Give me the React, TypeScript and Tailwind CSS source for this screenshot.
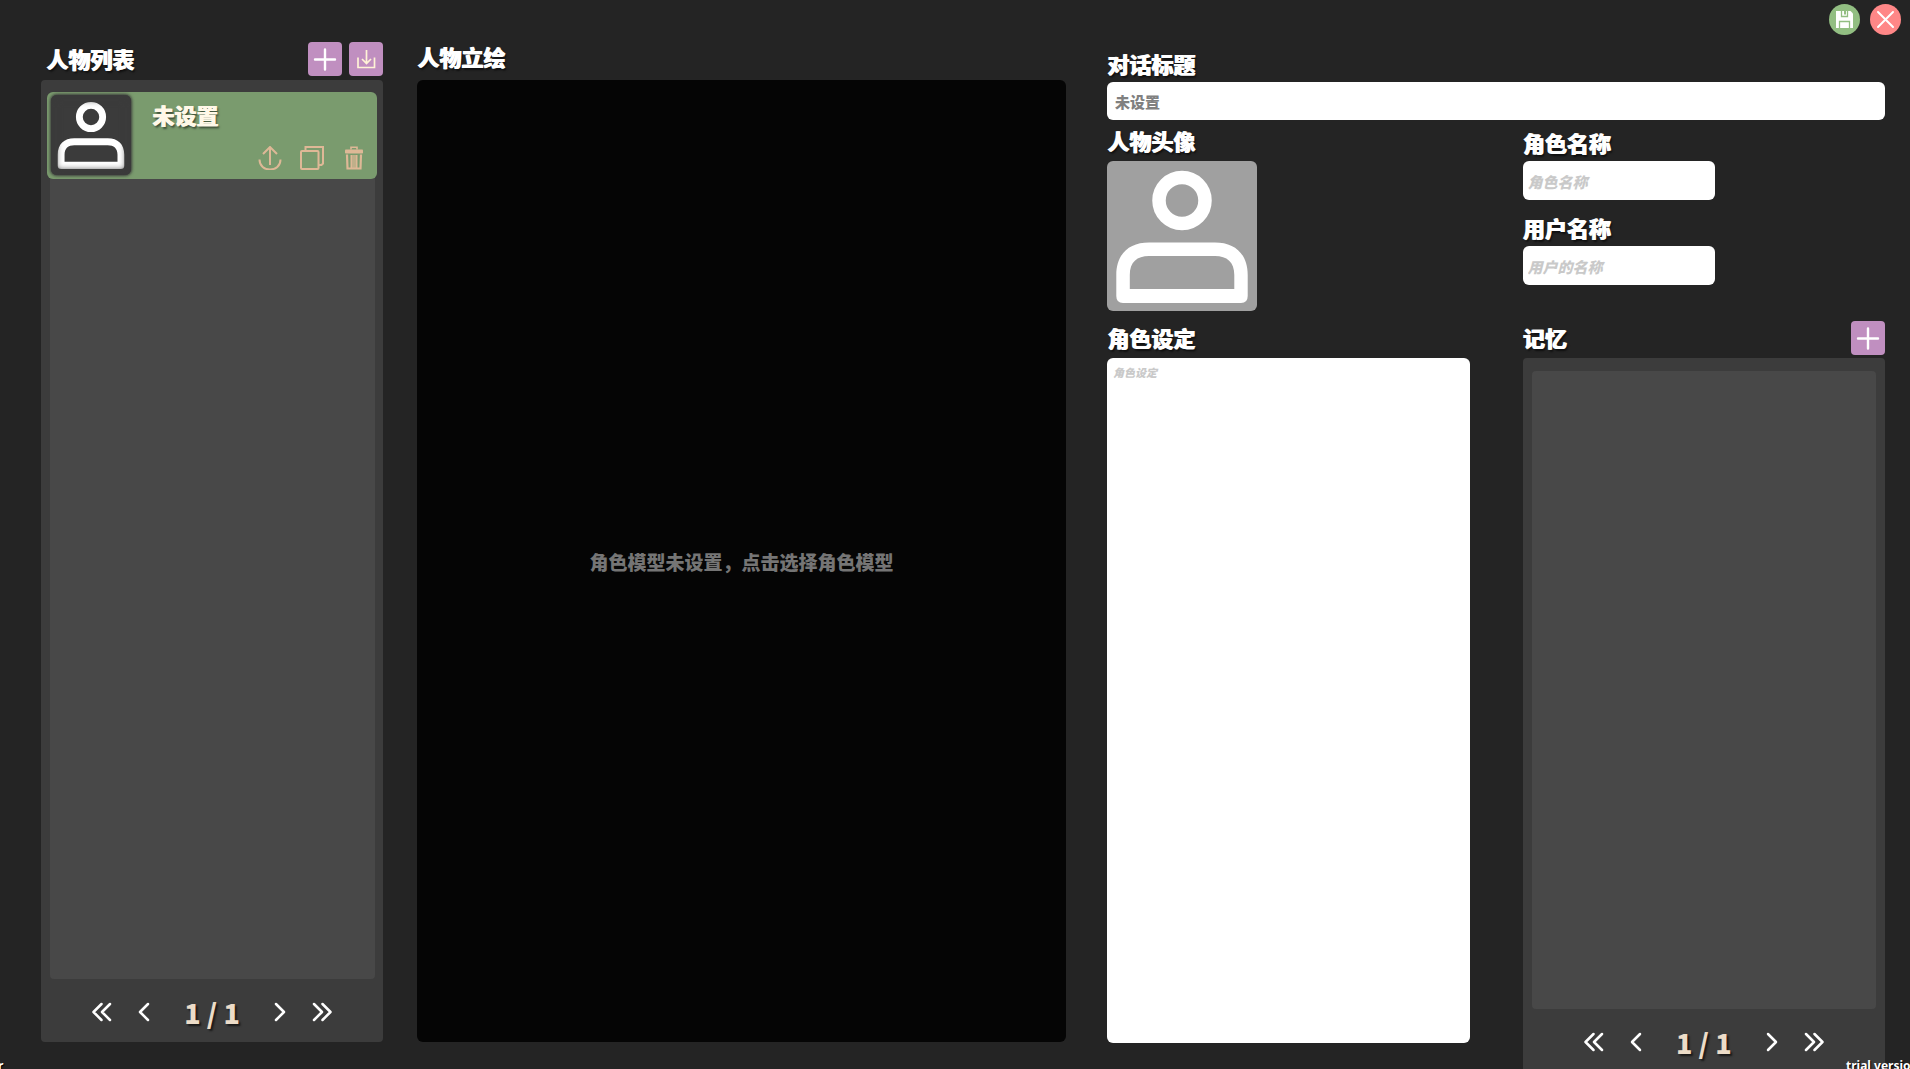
import type { ReactNode } from "react";

const headingShadow = "[text-shadow:1px_0_0_currentColor,2px_2px_2px_rgba(0,0,0,0.6)]";

function Heading({ children, htmlFor }: { children: ReactNode; htmlFor?: string }) {
  const cls = `block text-[22px] leading-6 font-black text-white ${headingShadow}`;
  return htmlFor ? (
    <label htmlFor={htmlFor} className={cls}>
      {children}
    </label>
  ) : (
    <h2 className={cls}>{children}</h2>
  );
}

function PersonIcon({ className }: { className: string }) {
  return (
    <svg viewBox="0 0 150 150" className={className} fill="white" aria-hidden="true">
      <circle cx="75" cy="39.5" r="23" fill="none" stroke="white" strokeWidth="13.5" />
      <path
        fillRule="evenodd"
        d="M9.3 135V114C9.3 93 22 81.5 42 81.5H108C128 81.5 140.7 93 140.7 114V135Q140.7 142 134 142H16Q9.3 142 9.3 135ZM22.8 128V114C22.8 101 30 95 42 95H108C120 95 127.3 101 127.3 114V128Z"
      />
    </svg>
  );
}

function PlusIcon() {
  return (
    <svg viewBox="0 0 34 34" className="size-[34px]" stroke="white" strokeWidth="2.4" strokeLinecap="round" aria-hidden="true">
      <path d="M17 7.5V27.5M7 17.5H27" />
    </svg>
  );
}

function SquareButton({ label, children }: { label: string; children: ReactNode }) {
  return (
    <button type="button" aria-label={label} className="size-[34px] shrink-0 rounded-[4px] bg-[#c08fc0]">
      {children}
    </button>
  );
}

function Chevron({ d, label }: { d: string; label: string }) {
  return (
    <button type="button" aria-label={label} className="flex h-6 w-[42px] items-center justify-center">
      <svg viewBox="0 0 20 20" className="size-5" fill="none" stroke="white" strokeWidth="2.5" strokeLinecap="round" strokeLinejoin="round" aria-hidden="true">
        <path d={d} />
      </svg>
    </button>
  );
}

function Pager({ className }: { className: string }) {
  return (
    <nav aria-label="分页" className={`flex shrink-0 items-start justify-center pt-[21px] ${className}`}>
      <Chevron label="首页" d="M9.500 2L1.500 10L9.500 18M18 2L10 10L18 18" />
      <Chevron label="上一页" d="M14 2L6 10L14 18" />
      <span className="w-[94px] text-center text-[27px] leading-[26px] font-black text-[#ecdcc8] [text-shadow:2px_2px_2px_rgba(0,0,0,0.6)]">
        1 / 1
      </span>
      <Chevron label="下一页" d="M6 2L14 10L6 18" />
      <Chevron label="末页" d="M2 2L10 10L2 18M10.500 2L18.500 10L10.500 18" />
    </nav>
  );
}

function CharacterCard() {
  return (
    <article className="-mt-px -mr-[2px] -ml-[3px] flex h-[87px] rounded-[6px] bg-[#7a9b6e] py-[3px] pl-1">
      <div className="relative flex size-20 shrink-0 items-center justify-center rounded-[6px] bg-[#3b3b3b] shadow-[0_0_3px_1px_#3b3b3b]">
        <PersonIcon className="size-[76px]" />
        <span className="absolute inset-0 rounded-[6px] shadow-[inset_0_0_6px_5px_#3b3b3b]" />
      </div>
      <div className="flex flex-1 flex-col justify-between pt-[7px] pr-[11px] pb-[6px] pl-[21px]">
        <h3 className="text-[22px] leading-6 font-black text-[#fff8e8] [text-shadow:1px_0_0_currentColor,2px_2px_2px_rgba(0,0,0,0.5)]">未设置</h3>
        <div className="flex justify-end gap-[18px]">
          <button type="button" aria-label="导出" className="size-6">
            <svg viewBox="0 0 24 24" className="size-6" fill="none" stroke="#deb896" strokeWidth="2" aria-hidden="true">
              <path d="M12 19V1M5 8L12 1L19 8M1.500 13.500C1.500 20 6.500 23.500 12 23.500S22.500 20 22.500 13.500" />
            </svg>
          </button>
          <button type="button" aria-label="复制" className="size-6">
            <svg viewBox="0 0 24 24" className="size-6" fill="none" stroke="#deb896" strokeWidth="2" aria-hidden="true">
              <rect x="1" y="5" width="17.500" height="18" rx="1" />
              <path d="M5.500 5V1H23V17.500L21.500 19H19" />
            </svg>
          </button>
          <button type="button" aria-label="删除" className="size-6">
            <svg viewBox="0 0 24 24" className="size-6" fill="none" stroke="#deb896" strokeWidth="1.600" aria-hidden="true">
              <path d="M9 3.500V1.200H15V3.500" />
              <rect x="3" y="3.500" width="18" height="4" rx="0.800" fill="#deb896" stroke="none" />
              <path d="M5 8.500L5.500 22.500H18.500L19 8.500M9.600 9V22M14.400 9V22" strokeWidth="2.200" />
              <path d="M12 9V22" strokeWidth="1.400" />
            </svg>
          </button>
        </div>
      </div>
    </article>
  );
}

const field =
  "block rounded-[6px] bg-white text-[15px] font-black outline-none";
const hint = "placeholder:italic placeholder:text-[#c9c9c9] placeholder:opacity-100";

export default function App() {
  return (
    <div className="relative flex h-screen flex-col overflow-hidden bg-[#242424] font-['Noto_Sans_CJK_SC',sans-serif]">
      <header className="flex h-[35px] shrink-0 justify-end gap-[10px] pt-1 pr-[9px]">
        <button type="button" aria-label="保存" className="size-[31px] rounded-full bg-[#92be82]">
          <svg viewBox="0 0 31 31" className="size-[31px]" aria-hidden="true">
            <path fill="white" d="M7 7H21.500L24 9.500V24H7Z" />
            <path fill="none" stroke="#92be82" strokeWidth="1.300" d="M12.500 7V12.500H18.500V7M10.500 24V17.500H20.500V24" />
            <path fill="#92be82" d="M15 7H17V10.500H15Z" />
          </svg>
        </button>
        <button type="button" aria-label="关闭" className="size-[31px] rounded-full bg-[#ff8787]">
          <svg viewBox="0 0 31 31" className="size-[31px]" stroke="white" strokeWidth="2" strokeLinecap="round" aria-hidden="true">
            <path d="M8 8L23 23M23 8L8 23" />
          </svg>
        </button>
      </header>

      <main className="flex min-h-0 flex-1 pr-[25px] pl-[41px]">
        <section className="flex w-[342px] shrink-0 flex-col pt-[7px] pb-[27px]">
          <div className="mb-1 flex items-center gap-[7px] pl-[5px]">
            <div className="flex-1 pb-[2px]">
              <Heading>人物列表</Heading>
            </div>
            <SquareButton label="新增人物">
              <PlusIcon />
            </SquareButton>
            <SquareButton label="导入人物">
              <svg viewBox="0 0 34 34" className="size-[34px]" fill="none" stroke="#fff3d6" strokeWidth="1.700" aria-hidden="true">
                <path d="M17.500 8V21.500M13 17L17.500 21.500L22 17M9 15.500V25.500H25.500V15.500" />
              </svg>
            </SquareButton>
          </div>
          <div className="flex min-h-0 flex-1 flex-col rounded-[4px] bg-[#3c3c3c] pt-[13px]">
            <div className="mr-2 ml-[9px] flex-1 rounded-[4px] bg-[#484848]">
              <CharacterCard />
            </div>
            <Pager className="h-[63px]" />
          </div>
        </section>

        <section className="ml-[34px] flex flex-[649] flex-col pt-[9px] pb-[27px]">
          <div className="mb-3">
            <Heading>人物立绘</Heading>
          </div>
          <button type="button" className="flex-1 rounded-[6px] bg-[#050505] pt-[2px] text-[19px] font-black text-[#757575]">
            角色模型未设置，点击选择角色模型
          </button>
        </section>

        <section className="ml-[41px] flex flex-[778] flex-col pt-4">
          <Heading htmlFor="dialog-title">对话标题</Heading>
          <input id="dialog-title" defaultValue="未设置" className={`${field} mt-[7px] h-[38px] w-full shrink-0 px-2 pt-px text-[#808080]`} />

          <div className="grid min-h-0 flex-1 grid-cols-2 gap-[53px]">
            <div className="flex min-h-0 flex-col pt-2 pb-[26px]">
              <Heading>人物头像</Heading>
              <button type="button" aria-label="选择人物头像" className="mt-[9px] size-[150px] shrink-0 rounded-[6px] bg-[#a0a0a0]">
                <PersonIcon className="size-[150px]" />
              </button>
              <div className="mt-[14px] mb-[9px]">
                <Heading htmlFor="role-setting">角色设定</Heading>
              </div>
              <textarea
                id="role-setting"
                placeholder="角色设定"
                className="block min-h-0 flex-1 resize-none rounded-[6px] bg-white px-[6px] py-[6px] text-[11px] leading-4 font-black outline-none placeholder:text-[#c9c9c9] placeholder:italic placeholder:opacity-100"
              />
            </div>

            <div className="flex min-h-0 flex-col pt-[10px]">
              <Heading htmlFor="role-name">角色名称</Heading>
              <input id="role-name" placeholder="角色名称" className={`${field} ${hint} mt-[7px] h-[39px] w-[192px] px-[5px] pt-[2px]`} />
              <div className="mt-[15px]">
                <Heading htmlFor="user-name">用户名称</Heading>
              </div>
              <input id="user-name" placeholder="用户的名称" className={`${field} ${hint} mt-[7px] h-[39px] w-[192px] px-[5px] pt-[2px]`} />

              <div className="mt-9 mb-[3px] flex items-center justify-between">
                <div className="pb-[2px]">
                  <Heading>记忆</Heading>
                </div>
                <SquareButton label="新增记忆">
                  <PlusIcon />
                </SquareButton>
              </div>
              <div className="flex min-h-0 flex-1 flex-col rounded-t-[4px] bg-[#3c3c3c] pt-[13px]">
                <div className="mx-[9px] flex-1 rounded-[4px] bg-[#484848]" />
                <Pager className="h-[60px]" />
              </div>
            </div>
          </div>
        </section>
      </main>

      <div className="pointer-events-none absolute inset-x-0 bottom-0 flex h-3 justify-between overflow-hidden font-['Noto_Sans',sans-serif] text-[12px] leading-[18px] font-bold text-white [text-shadow:1px_1px_1px_black]">
        <span className="-ml-[2px]">r</span>
        <span className="w-16 whitespace-nowrap">trial version</span>
      </div>
    </div>
  );
}
